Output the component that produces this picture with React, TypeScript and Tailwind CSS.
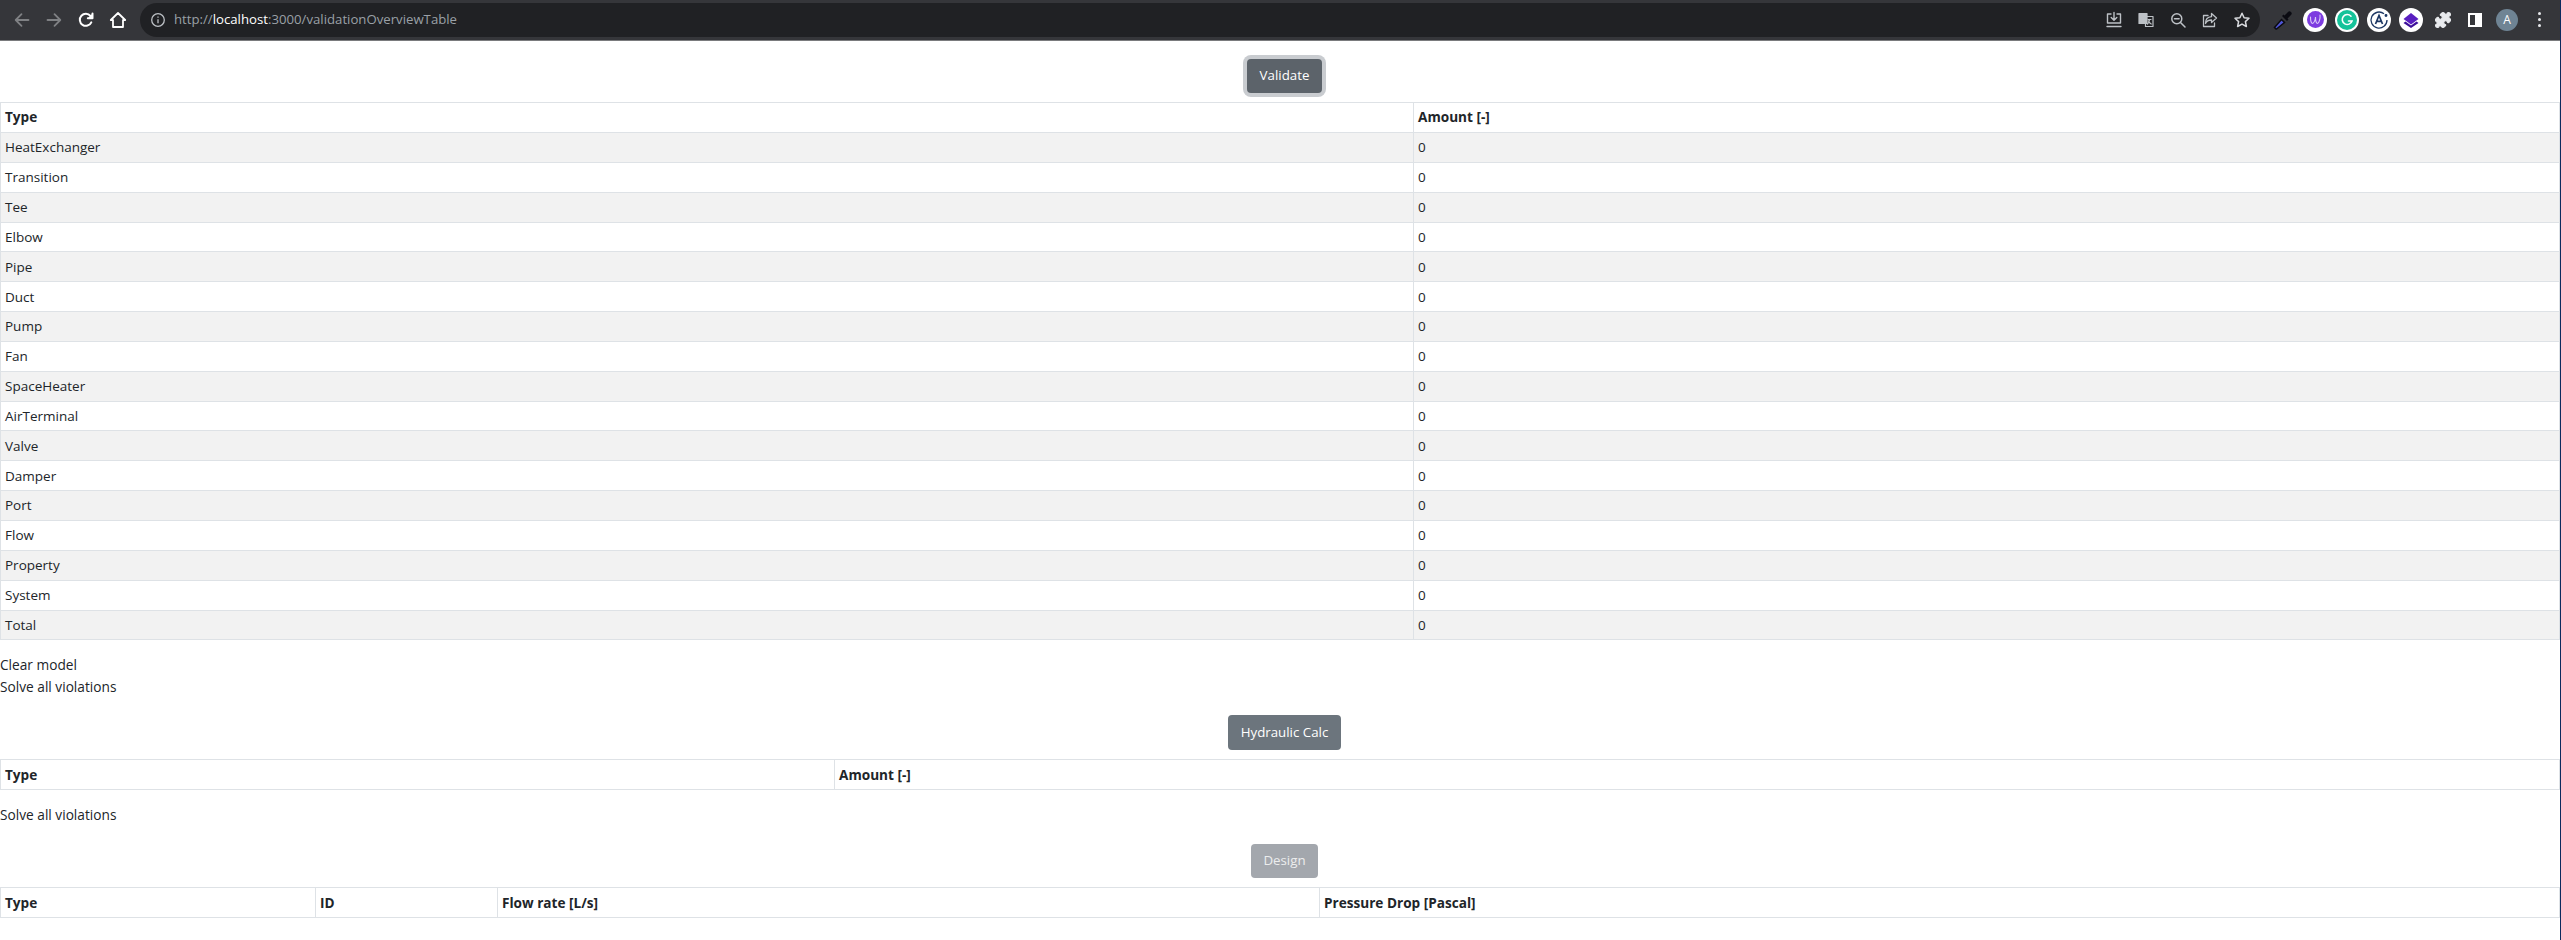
import { Puzzle } from "lucide-react";

const rows = [
  "HeatExchanger",
  "Transition",
  "Tee",
  "Elbow",
  "Pipe",
  "Duct",
  "Pump",
  "Fan",
  "SpaceHeater",
  "AirTerminal",
  "Valve",
  "Damper",
  "Port",
  "Flow",
  "Property",
  "System",
  "Total",
];

function IconBox({ children }: { children: React.ReactNode }) {
  return <div className="flex h-8 w-8 shrink-0 items-center justify-center">{children}</div>;
}

function Glyph({ children, color = "#e8eaed", width = 1.8 }: { children: React.ReactNode; color?: string; width?: number }) {
  return (
    <svg width="20" height="20" viewBox="0 0 20 20" fill="none" stroke={color} strokeWidth={width} strokeLinecap="round" strokeLinejoin="round">
      {children}
    </svg>
  );
}

function ExtCircle({ children }: { children: React.ReactNode }) {
  return <div className="flex h-6 w-6 items-center justify-center rounded-full bg-white">{children}</div>;
}

function Browser() {
  return (
    <div className="flex h-[41px] items-center border-b border-[#7a7b7d] bg-[#35363a] pb-px">
      <div className="flex w-[140px] shrink-0 pl-[6px]">
        <IconBox>
          <Glyph color="#7f8184">
            <path d="M16.5 10H4M9.5 4.2 3.7 10l5.8 5.8" />
          </Glyph>
        </IconBox>
        <IconBox>
          <Glyph color="#7f8184">
            <path d="M3.5 10H16M10.500 4.2l5.800 5.800-5.800 5.800" />
          </Glyph>
        </IconBox>
        <IconBox>
          <Glyph color="#ffffff" width={2}>
            <path d="M15.300 12.300A6 6 0 1 1 14.500 6L16 7.500" />
            <path d="M16.500 3.500v4.700h-4.700" fill="#ffffff" />
          </Glyph>
        </IconBox>
        <IconBox>
          <Glyph color="#ffffff" width={1.8}>
            <path d="M10 3 2.800 10H5v7h10v-7h2.200L10 3Z" />
          </Glyph>
        </IconBox>
      </div>

      <div className="flex h-[34px] w-[2120px] shrink-0 items-center rounded-full bg-[#202124] pl-[10px] pr-[2px] text-[13.2px]">
        <svg width="16" height="16" viewBox="0 0 16 16" fill="none" stroke="#bdc1c6" strokeWidth="1.300" className="shrink-0">
          <circle cx="8" cy="8" r="6.300" />
          <path d="M8 7.200v4M8 4.400v1.300" />
        </svg>
        <span className="ml-2 flex-1 whitespace-nowrap text-[#9aa0a6]">
          http://<span className="text-white">localhost</span>:3000/validationOverviewTable
        </span>
        <IconBox>
          <Glyph color="#bdc1c6" width={1.4}>
            <path d="M7 4H3.500v9h13V4H13M10 2.500v7.500M7.200 7.500 10 10.300l2.800-2.800M3 16.500h14" />
          </Glyph>
        </IconBox>
        <IconBox>
          <Glyph color="#bdc1c6" width={1.200}>
            <rect x="3" y="3.500" width="8" height="10" fill="#bdc1c6" />
            <rect x="9.500" y="6.500" width="7.500" height="10" />
            <path d="M12 9.500h3M13.500 9.500c0 2-1 3.500-2 4.500M12.500 11c.6 1.300 1.500 2.300 2.700 3" />
          </Glyph>
        </IconBox>
        <IconBox>
          <Glyph color="#bdc1c6" width={1.500}>
            <circle cx="8.800" cy="8.800" r="5" />
            <path d="M6.500 8.800h4.600M12.500 12.500l4.500 4.500" />
          </Glyph>
        </IconBox>
        <IconBox>
          <Glyph color="#bdc1c6" width={1.300}>
            <path d="M8 5.500H3.500v11h11V13M11.500 3.500l5 4.500-5 4.500V10c-3 0-5 1-6 3.500 0-4 2-6.500 6-6.800V3.500Z" />
          </Glyph>
        </IconBox>
        <IconBox>
          <Glyph color="#dadce0" width={1.500}>
            <path d="m10 3.200 2.100 4.500 4.900.6-3.600 3.300 1 4.900L10 14.100l-4.400 2.400 1-4.900L3 8.300l4.900-.6L10 3.200Z" />
          </Glyph>
        </IconBox>
      </div>

      <div className="ml-[7px] flex">
        <IconBox>
          <svg width="22" height="22" viewBox="0 0 22 22">
            <path d="M4 20 2.500 18.500l7-8 3 3-8 6.500Z" fill="#4f56d8" stroke="#0b0b12" strokeWidth="1.500" />
            <path d="m10 7 5 5 1.500-1.500-1-1 3.500-3.500a2 2 0 0 0-3-3L12.500 6.500l-1-1L10 7Z" fill="#0b0b12" />
          </svg>
        </IconBox>
        <IconBox>
          <ExtCircle>
            <div className="flex h-[17px] w-[17px] items-center justify-center rounded-full bg-[#7d3ce0]">
              <svg width="13" height="13" viewBox="0 0 13 13" fill="none" stroke="#d9c8f7" strokeWidth="1.100" strokeLinecap="round">
                <path d="M1.500 4c0 4 .8 6.500 2 6.500S6.500 7 6.500 4c0 4 .8 6.500 2 6.500S11.500 6 11 2" />
              </svg>
            </div>
          </ExtCircle>
        </IconBox>
        <IconBox>
          <ExtCircle>
            <div className="flex h-5 w-5 items-center justify-center rounded-full bg-[#15c39a]">
              <svg width="14" height="14" viewBox="0 0 14 14" fill="none" stroke="#ffffff" strokeWidth="1.600" strokeLinecap="round">
                <path d="M11 3.200A5 5 0 1 0 12 8H8.500" />
              </svg>
            </div>
          </ExtCircle>
        </IconBox>
        <IconBox>
          <ExtCircle>
            <svg width="20" height="20" viewBox="0 0 20 20" fill="none" stroke="#1d3763" strokeWidth="1.300">
              <path d="M15 3.800A8 8 0 1 0 18 10" />
              <path d="M6.500 14 10 5.500l3.500 8.500M8 11.300h4" strokeWidth="1.700" />
              <circle cx="17" cy="5.500" r="0.800" fill="#1d3763" />
            </svg>
          </ExtCircle>
        </IconBox>
        <IconBox>
          <ExtCircle>
            <svg width="18" height="18" viewBox="0 0 18 18">
              <path d="M9 2 16.500 8 9 13.500 1.500 8 9 2Z" fill="#5a1fc0" />
              <path d="M3.500 10.500 9 14.500l5.500-4 2 1.500L9 17 1.500 12l2-1.500Z" fill="#3d0f9a" />
            </svg>
          </ExtCircle>
        </IconBox>
        <IconBox>
          <Puzzle size={18} fill="#e8eaed" stroke="#e8eaed" strokeWidth={1.500} />
        </IconBox>
        <IconBox>
          <div className="flex h-[14px] w-[14px] border-2 border-white">
            <div className="flex-1 bg-[#35363a]" />
            <div className="w-[5px] bg-white" />
          </div>
        </IconBox>
        <IconBox>
          <div className="flex h-[22px] w-[22px] items-center justify-center rounded-full bg-[#6f8494] text-[12px] text-white">A</div>
        </IconBox>
        <IconBox>
          <div className="flex flex-col gap-[3px]">
            <div className="h-[3px] w-[3px] rounded-full bg-[#e8eaed]" />
            <div className="h-[3px] w-[3px] rounded-full bg-[#e8eaed]" />
            <div className="h-[3px] w-[3px] rounded-full bg-[#e8eaed]" />
          </div>
        </IconBox>
      </div>
    </div>
  );
}

function Th({ children, className = "" }: { children: React.ReactNode; className?: string }) {
  return <th className={`h-[30px] border border-[#dee2e6] px-[4px] py-0 text-left text-[13.6px] font-bold ${className}`}>{children}</th>;
}

function Td({ children }: { children: React.ReactNode }) {
  return <td className="h-[29.85px] border border-[#dee2e6] px-[4px] py-0 text-[13.5px]">{children}</td>;
}

export default function App() {
  return (
    <div className="flex min-h-[940px] bg-white font-['Open_Sans','Noto_Sans',sans-serif] text-[13.3px] text-[#212529]">
      <div className="w-[2560px] shrink-0">
        <Browser />

        <div className="flex justify-center pl-[9px] pt-[18px]">
          <button className="h-[34px] w-[75px] rounded-[4px] bg-[#5c636a] text-white ring-4 ring-[#c9ccd0]">Validate</button>
        </div>
        <table className="mt-[9px] w-full table-fixed border-collapse">
          <thead>
            <tr>
              <Th className="w-[1413px]">Type</Th>
              <Th>Amount [-]</Th>
            </tr>
          </thead>
          <tbody>
            {rows.map((name, i) => (
              <tr key={name} className={i % 2 === 0 ? "bg-[#f2f2f2]" : ""}>
                <Td>{name}</Td>
                <Td>0</Td>
              </tr>
            ))}
          </tbody>
        </table>

        <div className="mt-[14px] text-[13.7px] leading-[22px]">
          <p>Clear model</p>
          <p>Solve all violations</p>
        </div>

        <div className="flex justify-center pl-[9px] pt-[17px]">
          <button className="h-[35px] w-[113px] rounded-[4px] bg-[#6c757d] text-white">Hydraulic Calc</button>
        </div>
        <table className="mt-[9px] w-full table-fixed border-collapse">
          <thead>
            <tr>
              <Th className="w-[834px]">Type</Th>
              <Th>Amount [-]</Th>
            </tr>
          </thead>
        </table>

        <p className="mt-[14px] text-[13.7px] leading-[22px]">Solve all violations</p>

        <div className="flex justify-center pl-[9px] pt-[18px]">
          <button disabled className="h-[34px] w-[67px] rounded-[4px] bg-[#a3a7ad] text-[#eceded]">Design</button>
        </div>
        <table className="mt-[9px] w-full table-fixed border-collapse">
          <thead>
            <tr>
              <Th className="w-[315px]">Type</Th>
              <Th className="w-[182px]">ID</Th>
              <Th className="w-[822px]">Flow rate [L/s]</Th>
              <Th>Pressure Drop [Pascal]</Th>
            </tr>
          </thead>
        </table>
      </div>
      <div className="w-px shrink-0 bg-[#0b2a5e]" />
    </div>
  );
}
